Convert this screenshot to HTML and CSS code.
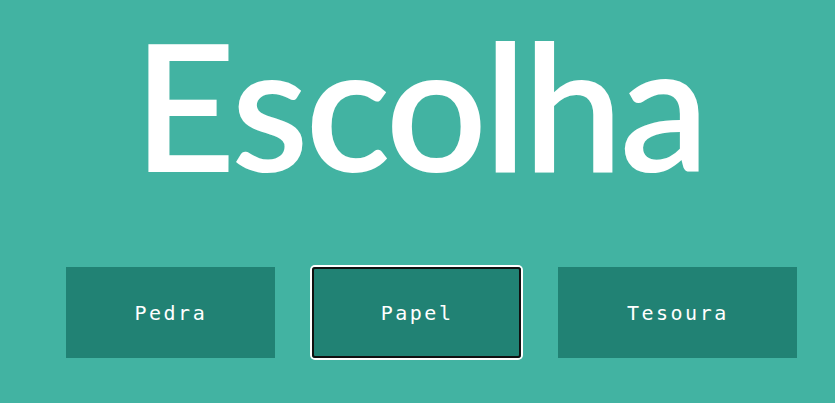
FILE: index.html
```html
<!DOCTYPE html>
<html lang="pt">
<head>
<meta charset="utf-8">
<title>Escolha</title>
<link rel="stylesheet" href="styles.css">
</head>
<body>
  <main class="page">
    <h1 class="title">Escolha</h1>
    <div class="choices">
      <button class="choice" type="button">Pedra</button>
      <button class="choice choice--focused" type="button">Papel</button>
      <button class="choice" type="button">Tesoura</button>
    </div>
  </main>
</body>
</html>
```
FILE: styles.css
```css
html, body {
  margin: 0;
  padding: 0;
  background: #42b3a2;
  height: 100%;
}

.page {
  display: flex;
  flex-direction: column;
}

.title {
  margin: 3px 0 0;
  padding-left: 4px;
  font-family: Lato, "Open Sans", sans-serif;
  font-weight: 600;
  font-size: 178px;
  line-height: 200px;
  letter-spacing: -3.5px;
  color: #ffffff;
  text-align: center;
}

.choices {
  display: flex;
  gap: 37px;
  padding-left: 66px;
  margin-top: 64px;
}

.choice {
  height: 91px;
  padding: 0 68px 0 68.5px;
  border: none;
  margin: 0;
  background: #218274;
  color: #ffffff;
  font-family: "DejaVu Sans Mono", "Liberation Mono", monospace;
  font-size: 20px;
  letter-spacing: 2.5px;
  cursor: pointer;
}

.choice--focused {
  border-radius: 3px;
  box-shadow: inset 0 0 0 2px #101010, 0 0 0 2px #ffffff;
}
```
